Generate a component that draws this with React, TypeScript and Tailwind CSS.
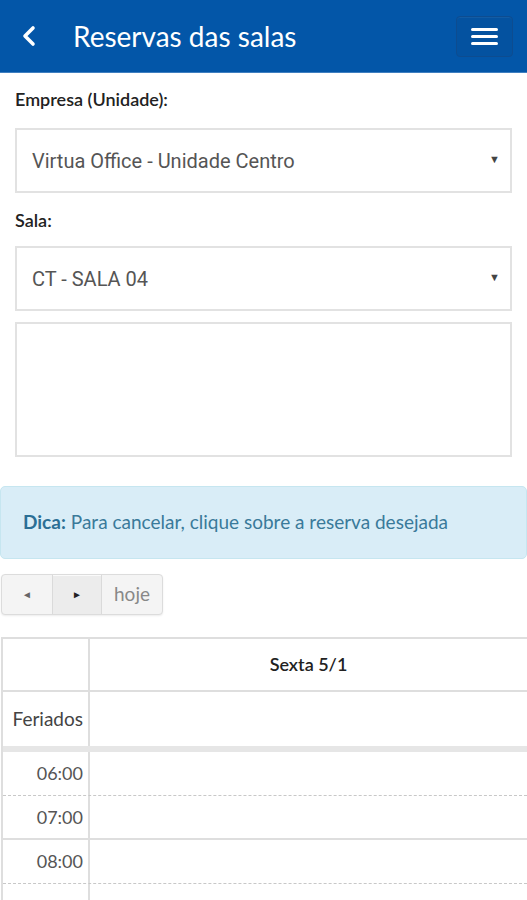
import React from "react";

export default function App() {
  const lato = { fontFamily: "Lato, 'Open Sans', sans-serif" };
  return (
    <div className="w-[527px] min-h-[900px] bg-white overflow-hidden" style={lato}>
      {/* Header */}
      <div className="h-[73px] bg-[#0356a8] flex items-center pl-[20px] pr-[14px] border-b border-[#3f7fc0]">
        <svg width="18" height="24" viewBox="0 0 18 24" className="mr-[35px]">
          <path d="M13 4 L5 12 L13 20" fill="none" stroke="white" strokeWidth="3.6" strokeLinecap="round" strokeLinejoin="round" />
        </svg>
        <div className="text-white text-[28px] leading-none flex-1">Reservas das salas</div>
        <div className="w-[57px] h-[41px] rounded-[4px] border border-[#0d4c90] bg-[#0452a0] flex flex-col items-center justify-center gap-[4px] shadow-[inset_0_1px_0_rgba(255,255,255,0.06)]">
          <div className="w-[27px] h-[3px] bg-white rounded" />
          <div className="w-[27px] h-[3px] bg-white rounded" />
          <div className="w-[27px] h-[3px] bg-white rounded" />
        </div>
      </div>

      {/* Form */}
      <div className="px-[15px] pt-[17px]">
        <div className="text-[18px] font-semibold text-[#222] leading-none">Empresa (Unidade):</div>
        <div className="mt-[20px] h-[65px] border-2 border-[#e2e2e2] flex items-center pl-[15px] pr-[10px]" style={{ fontFamily: "Roboto, sans-serif" }}>
          <span className="flex-1 text-[20px] text-[#555]">Virtua Office - Unidade Centro</span>
          <span className="text-[11px] text-[#444]">▼</span>
        </div>
        <div className="mt-[18px] text-[18px] font-semibold text-[#222] leading-none">Sala:</div>
        <div className="mt-[17px] h-[65px] border-2 border-[#e2e2e2] flex items-center pl-[15px] pr-[10px]" style={{ fontFamily: "Roboto, sans-serif" }}>
          <span className="flex-1 text-[20px] text-[#555]">CT - SALA 04</span>
          <span className="text-[11px] text-[#444]">▼</span>
        </div>
        <div className="mt-[11px] h-[135px] border-2 border-[#e2e2e2]" />
      </div>

      {/* Alert */}
      <div className="mt-[29px] h-[73px] bg-[#d9edf7] border border-[#c6e6f0] rounded-[5px] flex items-center pl-[22px] text-[19px] text-[#3a7a9a]">
        <span className="font-bold text-[#2b6f95] mr-[5px]">Dica:</span>
        <span>Para cancelar, clique sobre a reserva desejada</span>
      </div>

      {/* Buttons */}
      <div className="mt-[15px] ml-[1px] flex h-[41px] w-[162px] rounded-[4px] border border-[#dcdcdc] bg-[#f4f4f4] overflow-hidden shadow-[0_1px_2px_rgba(0,0,0,0.08)]">
        <div className="w-[50px] flex items-center justify-center text-[#666] text-[10px]">◄</div>
        <div className="w-[50px] flex items-center justify-center text-[#222] text-[10px] bg-[#ececec] border-x border-[#dadada] shadow-[inset_0_1px_0_#fafafa]">►</div>
        <div className="flex-1 flex items-center justify-center text-[#888] text-[19px]">hoje</div>
      </div>

      {/* Calendar table */}
      <div className="mt-[22px] ml-[1px] border-l-2 border-t-2 border-[#dedede]">
        <div className="flex h-[53px] border-b-2 border-[#dedede]">
          <div className="w-[87px] border-r-2 border-[#dedede]" />
          <div className="flex-1 flex items-center justify-center text-[18px] font-semibold text-[#222]">Sexta 5/1</div>
        </div>
        <div className="flex h-[60px] border-b-[6px] border-[#e6e6e6]">
          <div className="w-[87px] border-r-2 border-[#dedede] flex items-center justify-end pr-[5px] text-[19px] text-[#444]">Feriados</div>
          <div className="flex-1" />
        </div>
        {[
          ["06:00", "dashed"],
          ["07:00", "solid"],
          ["08:00", "dashed"],
        ].map(([t, s]) => (
          <div key={t} className={`flex h-[44px] ${s === "dashed" ? "border-b border-dashed border-[#c8c8c8]" : "border-b-2 border-solid border-[#dedede]"}`}>
            <div className="w-[87px] border-r-2 border-solid border-[#dedede] flex items-center justify-end pr-[5px] text-[18px] text-[#555]">{t}</div>
            <div className="flex-1" />
          </div>
        ))}
        <div className="flex h-[20px]">
          <div className="w-[87px] border-r-2 border-[#dedede]" />
          <div className="flex-1" />
        </div>
      </div>
    </div>
  );
}
